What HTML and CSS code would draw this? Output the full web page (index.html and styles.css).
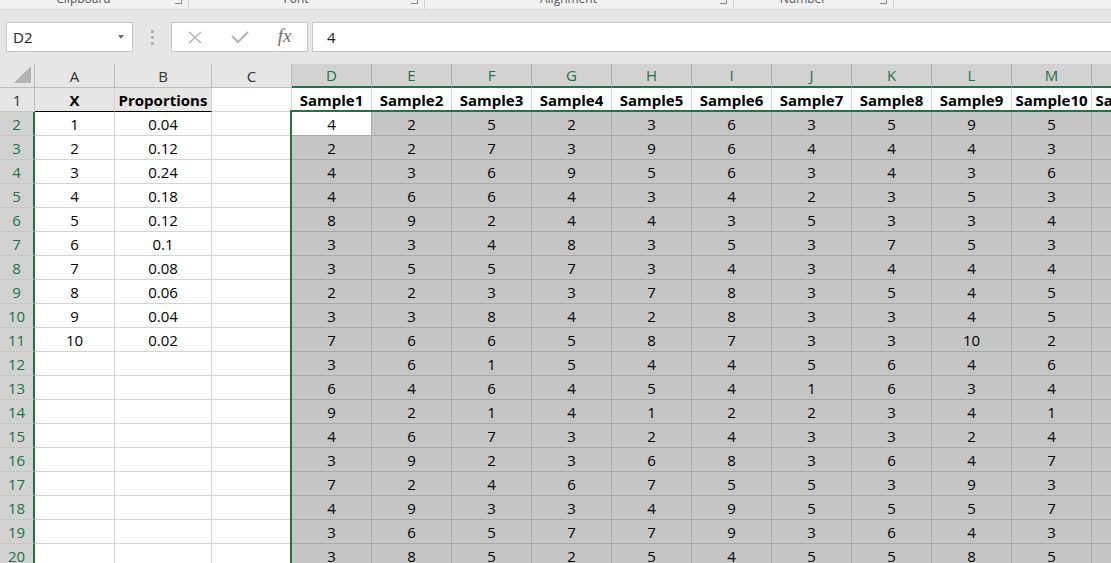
FILE: index.html
```html
<!DOCTYPE html>
<html lang="en">
<head>
    <meta charset="UTF-8">
    <meta name="viewport" content="width=device-width, initial-scale=1.0">
    <title>Sample Proportions</title>
    <link rel="stylesheet" href="styles.css">
</head>
<body>
    <!-- Ribbon group labels (cut off at the top) -->
    <div class="ribbon">
        <div class="group" style="width: 189px"><span class="label">Clipboard</span><i class="launch"></i></div>
        <div class="group" style="width: 236px"><span class="label">Font</span><i class="launch"></i></div>
        <div class="group" style="width: 309px"><span class="label">Alignment</span><i class="launch"></i></div>
        <div class="group" style="width: 160px"><span class="label">Number</span><i class="launch"></i></div>
    </div>

    <!-- Formula bar -->
    <div class="formula-bar">
        <div class="name-box"><span>D2</span><span class="arrow"></span></div>
        <div class="grip"><i></i><i></i><i></i></div>
        <div class="fx-buttons">
            <span class="btn">
                <svg width="14" height="13" viewBox="0 0 14 13"><path d="M1 1 L13 12 M13 1 L1 12" stroke="#b5b5b5" stroke-width="1.6" fill="none"/></svg>
            </span>
            <span class="btn">
                <svg width="18" height="12" viewBox="0 0 18 12"><path d="M1 5 L7 11 L17 1" stroke="#b5b5b5" stroke-width="2.2" fill="none"/></svg>
            </span>
            <span class="btn fx">fx</span>
        </div>
        <div class="formula">4</div>
    </div>

    <!-- Worksheet -->
    <div class="sheet">
        <div class="row head"><div class="corner"></div><div>A</div><div>B</div><div>C</div><div>D</div><div>E</div><div>F</div><div>G</div><div>H</div><div>I</div><div>J</div><div>K</div><div>L</div><div>M</div><div>N</div></div>
        <div class="row"><div class="rh">1</div><div class="title">X</div><div class="title">Proportions</div><div></div><div class="b">Sample1</div><div class="b">Sample2</div><div class="b">Sample3</div><div class="b">Sample4</div><div class="b">Sample5</div><div class="b">Sample6</div><div class="b">Sample7</div><div class="b">Sample8</div><div class="b">Sample9</div><div class="b">Sample10</div><div class="b">Sample11</div></div>
        <div class="row sel"><div class="rh">2</div><div>1</div><div>0.04</div><div></div><div class="act">4</div><div>2</div><div>5</div><div>2</div><div>3</div><div>6</div><div>3</div><div>5</div><div>9</div><div>5</div><div></div></div>
        <div class="row sel"><div class="rh">3</div><div>2</div><div>0.12</div><div></div><div>2</div><div>2</div><div>7</div><div>3</div><div>9</div><div>6</div><div>4</div><div>4</div><div>4</div><div>3</div><div></div></div>
        <div class="row sel"><div class="rh">4</div><div>3</div><div>0.24</div><div></div><div>4</div><div>3</div><div>6</div><div>9</div><div>5</div><div>6</div><div>3</div><div>4</div><div>3</div><div>6</div><div></div></div>
        <div class="row sel"><div class="rh">5</div><div>4</div><div>0.18</div><div></div><div>4</div><div>6</div><div>6</div><div>4</div><div>3</div><div>4</div><div>2</div><div>3</div><div>5</div><div>3</div><div></div></div>
        <div class="row sel"><div class="rh">6</div><div>5</div><div>0.12</div><div></div><div>8</div><div>9</div><div>2</div><div>4</div><div>4</div><div>3</div><div>5</div><div>3</div><div>3</div><div>4</div><div></div></div>
        <div class="row sel"><div class="rh">7</div><div>6</div><div>0.1</div><div></div><div>3</div><div>3</div><div>4</div><div>8</div><div>3</div><div>5</div><div>3</div><div>7</div><div>5</div><div>3</div><div></div></div>
        <div class="row sel"><div class="rh">8</div><div>7</div><div>0.08</div><div></div><div>3</div><div>5</div><div>5</div><div>7</div><div>3</div><div>4</div><div>3</div><div>4</div><div>4</div><div>4</div><div></div></div>
        <div class="row sel"><div class="rh">9</div><div>8</div><div>0.06</div><div></div><div>2</div><div>2</div><div>3</div><div>3</div><div>7</div><div>8</div><div>3</div><div>5</div><div>4</div><div>5</div><div></div></div>
        <div class="row sel"><div class="rh">10</div><div>9</div><div>0.04</div><div></div><div>3</div><div>3</div><div>8</div><div>4</div><div>2</div><div>8</div><div>3</div><div>3</div><div>4</div><div>5</div><div></div></div>
        <div class="row sel"><div class="rh">11</div><div>10</div><div>0.02</div><div></div><div>7</div><div>6</div><div>6</div><div>5</div><div>8</div><div>7</div><div>3</div><div>3</div><div>10</div><div>2</div><div></div></div>
        <div class="row sel"><div class="rh">12</div><div></div><div></div><div></div><div>3</div><div>6</div><div>1</div><div>5</div><div>4</div><div>4</div><div>5</div><div>6</div><div>4</div><div>6</div><div></div></div>
        <div class="row sel"><div class="rh">13</div><div></div><div></div><div></div><div>6</div><div>4</div><div>6</div><div>4</div><div>5</div><div>4</div><div>1</div><div>6</div><div>3</div><div>4</div><div></div></div>
        <div class="row sel"><div class="rh">14</div><div></div><div></div><div></div><div>9</div><div>2</div><div>1</div><div>4</div><div>1</div><div>2</div><div>2</div><div>3</div><div>4</div><div>1</div><div></div></div>
        <div class="row sel"><div class="rh">15</div><div></div><div></div><div></div><div>4</div><div>6</div><div>7</div><div>3</div><div>2</div><div>4</div><div>3</div><div>3</div><div>2</div><div>4</div><div></div></div>
        <div class="row sel"><div class="rh">16</div><div></div><div></div><div></div><div>3</div><div>9</div><div>2</div><div>3</div><div>6</div><div>8</div><div>3</div><div>6</div><div>4</div><div>7</div><div></div></div>
        <div class="row sel"><div class="rh">17</div><div></div><div></div><div></div><div>7</div><div>2</div><div>4</div><div>6</div><div>7</div><div>5</div><div>5</div><div>3</div><div>9</div><div>3</div><div></div></div>
        <div class="row sel"><div class="rh">18</div><div></div><div></div><div></div><div>4</div><div>9</div><div>3</div><div>3</div><div>4</div><div>9</div><div>5</div><div>5</div><div>5</div><div>7</div><div></div></div>
        <div class="row sel"><div class="rh">19</div><div></div><div></div><div></div><div>3</div><div>6</div><div>5</div><div>7</div><div>7</div><div>9</div><div>3</div><div>6</div><div>4</div><div>3</div><div></div></div>
        <div class="row sel"><div class="rh">20</div><div></div><div></div><div></div><div>3</div><div>8</div><div>5</div><div>2</div><div>5</div><div>4</div><div>5</div><div>5</div><div>8</div><div>5</div><div></div></div>

        <!-- Selection outline D2:N20 -->
        <div class="selection"></div>
    </div>
</body>
</html>
```

FILE: styles.css
```css
body {
    margin: 0;
    width: 1111px;
    height: 563px;
    overflow: hidden;
    background-color: #fff;
    font-family: "Open Sans", Arial, sans-serif;
    color: #000;
}

/* Ribbon labels */
.ribbon {
    display: flex;
    height: 9px;
    background-color: #f1f1f1;
    border-bottom: 1px solid #d9d9d9;
    overflow: hidden;
}
.group {
    display: flex;
    box-sizing: border-box;
    border-right: 1px solid #d2d2d2;
}
.group .label {
    flex: 1;
    text-align: center;
    font-size: 12px;
    line-height: 16px;
    margin-top: -9px;
    color: #555;
}
.launch {
    width: 6px;
    height: 6px;
    margin: -3px 6px 0 8px;
    border-right: 1px solid #8a8a8a;
    border-bottom: 1px solid #8a8a8a;
}

/* Formula bar */
.formula-bar {
    display: flex;
    height: 54px;
    box-sizing: border-box;
    padding: 12px 0 12px 6px;
    background-color: #e6e6e6;
}
.name-box {
    width: 127px;
    box-sizing: border-box;
    display: flex;
    align-items: center;
    justify-content: space-between;
    padding: 0 8px 0 6px;
    background-color: #fff;
    border: 1px solid #c6c6c6;
    font-size: 15px;
    color: #222;
}
.name-box .arrow {
    width: 0;
    height: 0;
    border-left: 3.5px solid transparent;
    border-right: 3.5px solid transparent;
    border-top: 4px solid #6d6d6d;
}
.grip {
    width: 38px;
    display: flex;
    flex-direction: column;
    align-items: center;
    justify-content: center;
    gap: 3px;
}
.grip i {
    width: 3px;
    height: 3px;
    background-color: #b4b4b4;
}
.fx-buttons {
    width: 137px;
    box-sizing: border-box;
    display: flex;
    margin-right: 4px;
    background-color: #fff;
    border: 1px solid #c6c6c6;
}
.fx-buttons .btn {
    width: 45px;
    display: flex;
    align-items: center;
    justify-content: center;
}
.fx-buttons .fx {
    font-family: "Liberation Serif", "Times New Roman", serif;
    font-style: italic;
    font-size: 19px;
    color: #6f6f6f;
    padding-bottom: 2px;
}
.formula {
    flex: 1;
    display: flex;
    align-items: center;
    padding-left: 14px;
    background-color: #fff;
    border: 1px solid #c6c6c6;
    border-right: none;
    font-size: 15px;
    color: #222;
}

/* Worksheet grid */
.sheet {
    position: relative;
}
.row {
    display: grid;
    grid-template-columns: 35px 80px 97px 80px repeat(11, 80px);
    height: 24px;
}
.row > div {
    box-sizing: border-box;
    display: flex;
    align-items: center;
    justify-content: center;
    white-space: nowrap;
    font-size: 15px;
    border-right: 1px solid #d4d4d4;
    border-bottom: 1px solid #d4d4d4;
}
.row .b {
    font-weight: bold;
}
.row .title {
    font-weight: bold;
    background-color: #e7e6e6;
    border-bottom-color: #000;
}

/* Column headers */
.row.head > div {
    background-color: #e6e6e6;
    color: #333;
    border-right-color: #bdbdbd;
    border-bottom-color: #bdbdbd;
}
.row.head > div:nth-child(n+5) {
    background-color: #d2d2d2;
    color: #217346;
    border-right-color: #ababab;
    border-bottom: 2px solid #217346;
}
.row.head .corner {
    position: relative;
}
.corner::after {
    content: "";
    position: absolute;
    right: 3px;
    bottom: 4px;
    width: 0;
    height: 0;
    border-left: 17px solid transparent;
    border-bottom: 17px solid #b4b4b4;
}

/* Row headers */
.row .rh {
    background-color: #e6e6e6;
    color: #333;
    border-right-color: #bdbdbd;
    border-bottom-color: #c6c6c6;
}
.row.sel .rh {
    background-color: #d2d2d2;
    color: #217346;
    border-right: 2px solid #217346;
}

/* Selected cells */
.row.sel > div:nth-child(n+5) {
    background-color: #c6c6c6;
    border-color: #a9a9a9;
}
.row.sel > div.act {
    background-color: #fff;
}
.selection {
    position: absolute;
    left: 290px;
    top: 46px;
    right: -200px;
    bottom: -200px;
    border-left: 2px solid #217346;
    border-top: 2px solid #217346;
    pointer-events: none;
}
```
